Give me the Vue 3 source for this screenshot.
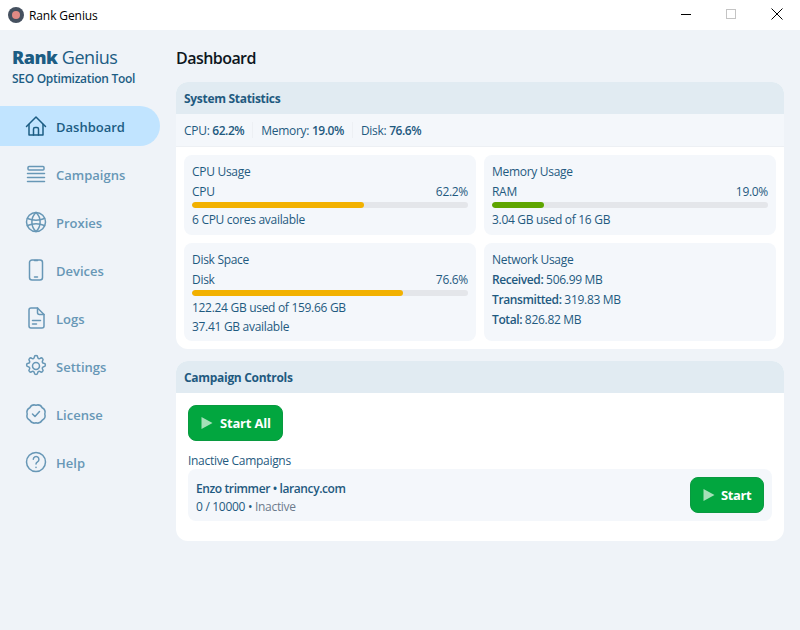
<template>
  <div class="window">
    <div class="titlebar">
      <div class="app-icon"><span></span></div>
      <span class="app-name">Rank Genius</span>
      <svg class="wc wc-min" width="12" height="12" viewBox="0 0 12 12"><path d="M1 6.500h10" stroke="#000" stroke-width="1" /></svg>
      <svg class="wc wc-max" width="12" height="12" viewBox="0 0 12 12"><rect x="1.500" y="1.500" width="9" height="9" fill="none" stroke="#c4c4c4" /></svg>
      <svg class="wc wc-close" width="12" height="12" viewBox="0 0 12 12"><path d="M.5.5l11 11M11.500.5l-11 11" stroke="#000" stroke-width="1" fill="none" /></svg>
    </div>

    <div class="body">
      <aside class="sidebar">
        <div class="brand">
          <div class="brand-name"><b>Rank</b> Genius</div>
          <div class="brand-sub">SEO Optimization Tool</div>
        </div>
        <nav class="nav">
          <div v-for="n in navItems" :key="n.label" :class="['nav-item', { active: n.active }]">
            <svg class="nav-icon" viewBox="0 0 24 24" width="24" height="24" fill="none" stroke="currentColor" stroke-width="1.5" stroke-linecap="round" stroke-linejoin="round">
              <path v-for="(d, i) in n.paths" :key="i" :d="d" />
            </svg>
            <span class="nav-label">{{ n.label }}</span>
          </div>
        </nav>
      </aside>

      <main class="main">
        <h1>Dashboard</h1>

        <section class="card">
          <div class="card-head">System Statistics</div>
          <div class="strip">
            <span>CPU: <em>62.2%</em></span>
            <i></i>
            <span>Memory: <em>19.0%</em></span>
            <i></i>
            <span>Disk: <em>76.6%</em></span>
          </div>
          <div class="grid">
            <div class="tile" v-for="m in meters" :key="m.title">
              <div class="tile-title">{{ m.title }}</div>
              <div class="meter-row"><span>{{ m.label }}</span><span>{{ m.value }}%</span></div>
              <div class="track"><div class="fill" :style="{ width: m.value + '%', background: m.color }"></div></div>
              <div class="note" v-for="t in m.notes" :key="t">{{ t }}</div>
            </div>
            <div class="tile net">
              <div class="tile-title">Network Usage</div>
              <div class="net-line"><b>Received:</b> 506.99 MB</div>
              <div class="net-line"><b>Transmitted:</b> 319.83 MB</div>
              <div class="net-line"><b>Total:</b> 826.82 MB</div>
            </div>
          </div>
        </section>

        <section class="card controls">
          <div class="card-head">Campaign Controls</div>
          <div class="controls-body">
            <button class="btn big">
              <svg width="14" height="14" viewBox="0 0 14 14"><path d="M1.500 1v12L12.500 7z" fill="#a5e0b8" /></svg>
              <span>Start All</span>
            </button>
            <div class="sub-head">Inactive Campaigns</div>
            <div class="camp">
              <div class="camp-info">
                <div class="camp-name">Enzo trimmer • larancy.com</div>
                <div class="camp-meta">0 / 10000 • <span>Inactive</span></div>
              </div>
              <button class="btn small">
                <svg width="14" height="14" viewBox="0 0 14 14"><path d="M1.500 1v12L12.500 7z" fill="#a5e0b8" /></svg>
                <span>Start</span>
              </button>
            </div>
          </div>
        </section>
      </main>
    </div>
  </div>
</template>

<script setup>
// wavy badge outline for the license icon
function badgePath() {
  const n = 8
  let d = ''
  for (let i = 0; i < n; i++) {
    const a = (i / n) * Math.PI * 2 - Math.PI / 2
    const m = a + Math.PI / n
    const b = a + (Math.PI * 2) / n
    const p = (r, t) => `${(12 + r * Math.cos(t)).toFixed(2)} ${(12 + r * Math.sin(t)).toFixed(2)}`
    if (i === 0) d += `M${p(8.8, a)}`
    d += `Q${p(10.9, m)} ${p(8.8, b)}`
  }
  return d + 'z'
}

const navItems = [
  { label: 'Dashboard', active: true, paths: ['M2.500 12.500 12 3l9.500 9.500', 'M5 10.500V21h14V10.500', 'M9.500 21v-6a1.500 1.500 0 0 1 1.500-1.500h2a1.500 1.500 0 0 1 1.500 1.500v6'] },
  { label: 'Campaigns', paths: ['M5 4.500h14a1 1 0 0 1 1 1v1.500a1 1 0 0 1-1 1H5a1 1 0 0 1-1-1V5.500a1 1 0 0 1 1-1z', 'M3.500 11.500h17', 'M3.500 15.500h17', 'M3.500 19.500h17'] },
  { label: 'Proxies', paths: ['M12 2.500a9.500 9.500 0 1 0 0 19 9.500 9.500 0 0 0 0-19z', 'M12 2.500c-5.500 5-5.500 14 0 19', 'M12 2.500c5.500 5 5.500 14 0 19', 'M3.500 8.500c5 2 12 2 17 0', 'M3.500 15.500c5-2 12-2 17 0'] },
  { label: 'Devices', paths: ['M8 2h8a2.500 2.500 0 0 1 2.500 2.500v15A2.500 2.500 0 0 1 16 22H8a2.500 2.500 0 0 1-2.500-2.500v-15A2.500 2.500 0 0 1 8 2z', 'M10.500 2.500h3', 'M10.500 19h3'] },
  { label: 'Logs', paths: ['M13.500 2H7a2 2 0 0 0-2 2v16a2 2 0 0 0 2 2h11a2 2 0 0 0 2-2V8.500z', 'M13.500 2v4.500a2 2 0 0 0 2 2H20', 'M8.500 14.500h8', 'M8.500 18h4'] },
  { label: 'Settings', paths: ['M10.300 3.300a1.700 1.700 0 0 1 3.400 0c.1 1.200 1.500 1.800 2.500 1.100a1.700 1.700 0 0 1 2.400 2.400c-.7 1-.1 2.400 1.100 2.500a1.700 1.700 0 0 1 0 3.400c-1.200.1-1.800 1.500-1.100 2.500a1.700 1.700 0 0 1-2.400 2.400c-1-.7-2.400-.1-2.500 1.100a1.700 1.700 0 0 1-3.400 0c-.1-1.200-1.500-1.800-2.500-1.100a1.700 1.700 0 0 1-2.400-2.400c.7-1 .1-2.400-1.100-2.500a1.700 1.700 0 0 1 0-3.400c1.200-.1 1.800-1.500 1.100-2.500a1.700 1.700 0 0 1 2.400-2.400c1 .7 2.400.1 2.500-1.100z', 'M12 8.500a3.500 3.500 0 1 0 0 7 3.500 3.500 0 0 0 0-7z'] },
  { label: 'License', paths: [badgePath(), 'M8.500 12l2.500 2.500 4.500-5'] },
  { label: 'Help', paths: ['M12 2.500a9.500 9.500 0 1 0 0 19 9.500 9.500 0 0 0 0-19z', 'M9.300 9.300a2.800 2.800 0 1 1 4.200 2.500c-.9.500-1.500 1.100-1.500 2.200', 'M12 17.300v.1'] },
]

const meters = [
  { title: 'CPU Usage', label: 'CPU', value: '62.2', color: '#f2b100', notes: ['6 CPU cores available'] },
  { title: 'Memory Usage', label: 'RAM', value: '19.0', color: '#5ea500', notes: ['3.04 GB used of 16 GB'] },
  { title: 'Disk Space', label: 'Disk', value: '76.6', color: '#f2b100', notes: ['122.24 GB used of 159.66 GB', '37.41 GB available'] },
]
</script>

<style>
html, body {
  margin: 0;
  background: #eff3f8;
}
</style>

<style scoped>
.window {
  width: 800px;
  height: 630px;
  overflow: hidden;
  background: #eff3f8;
  font-family: "Open Sans", "Noto Sans", sans-serif;
  color: #1f5a80;
  font-size: 12px;
  letter-spacing: -0.3px;
}
.titlebar {
  height: 30px;
  background: #fff;
  display: flex;
  align-items: center;
  padding-left: 8px;
  color: #000;
  position: relative;
}
.app-icon {
  width: 16px;
  height: 16px;
  border-radius: 50%;
  background: #45505f;
  display: flex;
  align-items: center;
  justify-content: center;
}
.app-icon span {
  width: 8px;
  height: 8px;
  border-radius: 50%;
  background: #e28a85;
}
.app-name {
  margin-left: 5px;
  font-size: 12px;
  letter-spacing: -0.1px;
}
.wc {
  position: absolute;
  top: 8px;
}
.wc-min {
  left: 680px;
}
.wc-max {
  left: 725px;
}
.wc-close {
  left: 771px;
}
.body {
  display: flex;
}
.sidebar {
  width: 160px;
  flex-shrink: 0;
}
.brand {
  padding: 15px 0 0 12px;
  height: 61px;
  color: #1c5d84;
}
.brand-name {
  font-size: 18px;
  line-height: 24px;
  letter-spacing: -0.45px;
}
.brand-name b {
  font-weight: 800;
}
.brand-sub {
  font-size: 12px;
  line-height: 20px;
  font-weight: 600;
  letter-spacing: -0.3px;
}
.nav {
  display: flex;
  flex-direction: column;
  gap: 8px;
}
.nav-item {
  height: 40px;
  display: flex;
  align-items: center;
  padding-left: 24px;
  gap: 8px;
  color: #6797b6;
  font-size: 13px;
  font-weight: 600;
  letter-spacing: 0;
}
.nav-label {
  padding-top: 2px;
}
.nav-item.active {
  background: #c1e4ff;
  color: #1c5d84;
  border-radius: 0 20px 20px 0;
}
.nav-icon {
  flex-shrink: 0;
}
.main {
  flex: 1;
  padding: 0 16px;
}
h1 {
  margin: 0;
  color: #0d1620;
  font-size: 16px;
  font-weight: 600;
  line-height: 22px;
  padding: 17px 0 13px;
  letter-spacing: -0.55px;
}
.card {
  background: #fff;
  border-radius: 12px;
  overflow: hidden;
  margin-bottom: 12px;
}
.card-head {
  height: 32px;
  line-height: 34px;
  padding-left: 8px;
  background: #e1ebf2;
  font-weight: 700;
  font-size: 12px;
  color: #1f5a80;
}
.strip {
  height: 32px;
  display: flex;
  align-items: center;
  padding-left: 8px;
  gap: 8px;
  background: #f4f7fb;
  border-bottom: 1px solid #edf0f4;
}
.strip em {
  font-style: normal;
  font-weight: 600;
  letter-spacing: -0.45px;
}
.strip i {
  width: 1px;
  height: 16px;
  background: #edf0f4;
}
.grid {
  display: grid;
  grid-template-columns: 1fr 1fr;
  grid-template-rows: 80px 98px;
  gap: 8px;
  padding: 8px;
}
.tile {
  background: #f4f7fb;
  border-radius: 8px;
  padding: 8px;
}
.tile-title {
  line-height: 18px;
  font-weight: 500;
}
.meter-row {
  display: flex;
  justify-content: space-between;
  margin-top: 2px;
  line-height: 18px;
  font-weight: 500;
}
.track {
  height: 6px;
  background: #e4e6ea;
  border-radius: 3px;
  overflow: hidden;
  margin-top: 1px;
}
.fill {
  height: 100%;
  border-radius: 3px;
}
.note {
  line-height: 18px;
}
.track + .note {
  margin-top: 3px;
}
.note + .note {
  margin-top: 1px;
}
.net-line {
  line-height: 18px;
  margin-top: 2px;
}
.net-line b {
  font-weight: 600;
  letter-spacing: -0.4px;
}
.controls-body {
  padding: 12px;
  height: 148px;
  box-sizing: border-box;
}
.btn {
  height: 36px;
  border: 1px solid #099a40;
  border-radius: 8px;
  background: #02a63f;
  color: #fff;
  font-family: inherit;
  font-size: 13px;
  font-weight: 700;
  letter-spacing: -0.2px;
  display: flex;
  align-items: center;
  flex-shrink: 0;
  white-space: nowrap;
  padding: 0 0 0 11px;
}
.btn.big {
  width: 95px;
  gap: 6px;
}
.btn.small {
  width: 74px;
  gap: 5px;
  letter-spacing: -0.4px;
}
.sub-head {
  margin-top: 12px;
  line-height: 16px;
  font-weight: 500;
}
.camp {
  background: #f4f7fb;
  border-radius: 8px;
  height: 52px;
  box-sizing: border-box;
  display: flex;
  align-items: center;
  justify-content: space-between;
  padding: 0 8px;
}
.camp-info {
  padding-top: 5px;
}
.camp-name {
  font-weight: 600;
  line-height: 18px;
  letter-spacing: -0.4px;
}
.camp-meta {
  line-height: 18px;
}
.camp-meta span {
  color: #6d7b8c;
}
</style>
